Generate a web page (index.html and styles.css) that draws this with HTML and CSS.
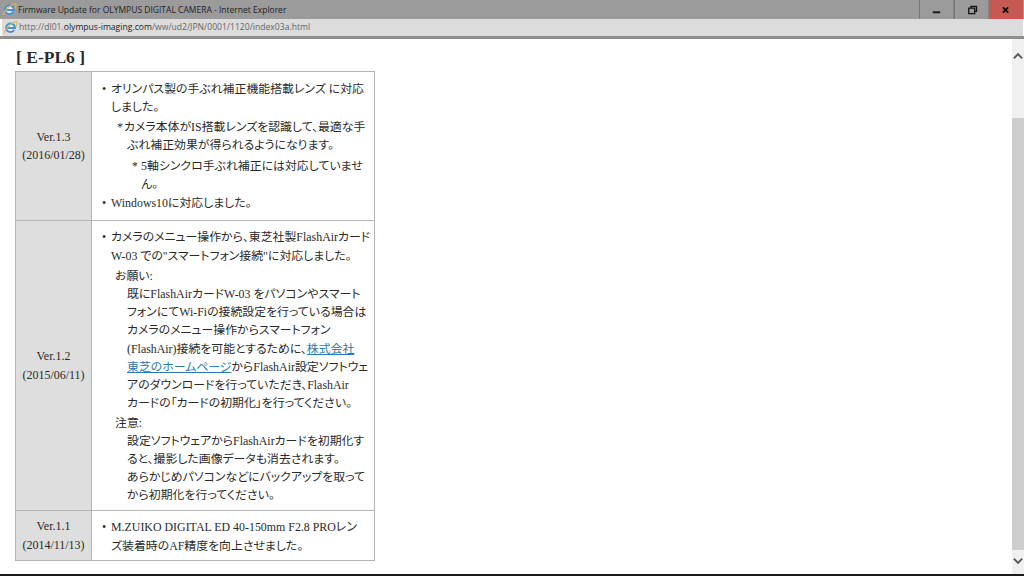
FILE: index.html
```html
<!DOCTYPE html>
<html lang="ja">
<head>
<meta charset="utf-8">
<title>Firmware Update for OLYMPUS DIGITAL CAMERA</title>
<link rel="stylesheet" href="styles.css">
</head>
<body>
<div class="window">
  <header class="titlebar">
    <svg class="ie-icon" viewBox="0 0 16 16"><path d="M3.500 8.500h9.200C12.700 5.500 10.600 3.800 8 3.800C5.200 3.800 3.400 6 3.400 8.500C3.400 11 5.400 12.800 8 12.800C9.800 12.800 11 12 11.900 10.700" fill="#f2f2f2" stroke="#3f93d6" stroke-width="2.200"/><path d="M1.800 13.800C0.800 11 9 2.500 14.500 1.800C15.800 3 14.800 5 13.500 7" fill="none" stroke="#dcb458" stroke-width="1.300"/></svg>
    <span class="title">Firmware Update for OLYMPUS DIGITAL CAMERA - Internet Explorer</span>
    <div class="controls">
      <div class="ctl"><svg viewBox="0 0 36 19"><rect x="14" y="11" width="8" height="2" fill="#111"/></svg></div>
      <div class="ctl"><svg viewBox="0 0 36 19"><path d="M15 7.500h6.500v6H15zM17.500 7.500V5.500H23.500V11H21.500" fill="none" stroke="#111" stroke-width="1.400"/></svg></div>
      <div class="ctl close"><svg viewBox="0 0 36 19"><path d="M14.500 6.500l6 6M20.500 6.500l-6 6" stroke="#111" stroke-width="2"/></svg></div>
    </div>
  </header>
  <div class="addressbar">
    <svg class="ie-icon" viewBox="0 0 16 16"><path d="M3.500 8.500h9.200C12.700 5.500 10.600 3.800 8 3.800C5.200 3.800 3.400 6 3.400 8.500C3.400 11 5.400 12.800 8 12.800C9.800 12.800 11 12 11.900 10.700" fill="#f2f2f2" stroke="#3f93d6" stroke-width="2.200"/><path d="M1.800 13.800C0.800 11 9 2.500 14.500 1.800C15.800 3 14.800 5 13.500 7" fill="none" stroke="#dcb458" stroke-width="1.300"/></svg>
    <span class="url">http://dl01.<b>olympus-imaging.com</b>/ww/ud2/JPN/0001/1120/index03a.html</span>
  </div>
  <div class="viewport">
    <main class="page">
      <h1 class="heading">[ E-PL6 ]</h1>
      <table class="versions">
        <tr class="row-a">
          <th>Ver.1.3<br>(2016/01/28)</th>
          <td>
            <ul class="list">
              <li>オリンパス製の手ぶれ補正機能搭載レンズ に対応<br>しました。
                <p class="note n1"><span class="mark">*</span>カメラ本体がIS搭載レンズを認識して、最適な手<br>ぶれ補正効果が得られるようになります。</p>
                <p class="note n2"><span class="mark">*</span>5軸シンクロ手ぶれ補正には対応していませ<br>ん。</p>
              </li>
              <li>Windows10に対応しました。</li>
            </ul>
          </td>
        </tr>
        <tr class="row-b">
          <th>Ver.1.2<br>(2015/06/11)</th>
          <td>
            <ul class="list">
              <li>カメラのメニュー操作から、東芝社製FlashAirカード<br>W-03 での"スマートフォン接続"に対応しました。
                <p class="label">お願い:</p>
                <p class="body">既にFlashAirカードW-03 をパソコンやスマート<br>フォンにてWi-Fiの接続設定を行っている場合は<br>カメラのメニュー操作からスマートフォン<br>(FlashAir)接続を可能とするために、<a href="#">株式会社<br>東芝のホームページ</a>からFlashAir設定ソフトウェ<br>アのダウンロードを行っていただき、FlashAir<br>カードの「カードの初期化」を行ってください。</p>
                <p class="label gap">注意:</p>
                <p class="body">設定ソフトウェアからFlashAirカードを初期化す<br>ると、撮影した画像データも消去されます。<br>あらかじめパソコンなどにバックアップを取って<br>から初期化を行ってください。</p>
              </li>
            </ul>
          </td>
        </tr>
        <tr class="row-c">
          <th>Ver.1.1<br>(2014/11/13)</th>
          <td>
            <ul class="list">
              <li>M.ZUIKO DIGITAL ED 40-150mm F2.8 PROレン<br>ズ装着時のAF精度を向上させました。</li>
            </ul>
          </td>
        </tr>
      </table>
    </main>
    <aside class="scrollbar">
      <div class="arrow up"><svg viewBox="0 0 13 17"><path d="M2 11l4.500-4.500L11 11" fill="none" stroke="#555" stroke-width="2"/></svg></div>
      <div class="track"><div class="thumb"></div></div>
      <div class="arrow down"><svg viewBox="0 0 13 17"><path d="M2 6l4.500 4.500L11 6" fill="none" stroke="#555" stroke-width="2"/></svg></div>
    </aside>
  </div>
  <div class="bottom"></div>
</div>
</body>
</html>
```
FILE: styles.css
```css
* { box-sizing: border-box; }
html, body { margin: 0; height: 100%; overflow: hidden; background: #fff; }
.window { width: 1024px; height: 576px; display: flex; flex-direction: column; }
.titlebar { height: 19px; background: #9b9b9b; display: flex; align-items: center; padding-left: 2px; flex: none; }
.ie-icon { width: 15px; height: 15px; flex: none; }
.title { font: 8.500px/19px "Open Sans", "Noto Sans", sans-serif; color: #222; margin-left: 1px; white-space: nowrap; flex: 1; }
.controls { display: flex; height: 21px; align-self: flex-start; margin-right: 1px; flex: none; }
.ctl { width: 35px; height: 21px; border: 1px solid #858585; border-top: 0; border-left-color: #777; background: #9b9b9b; }
.ctl svg { display: block; width: 100%; height: 100%; }
.close { background: #c65a52; border-color: #c65a52; width: 34px; }
.addressbar { height: 17px; background: #dcdcdc; display: flex; align-items: center; padding-left: 1px; flex: none; margin: 0 1px 0 2px; }
.url { font: 8.600px/17px "Open Sans", "Noto Sans", sans-serif; color: #666; margin-left: 1px; white-space: nowrap; }
.url b { font-weight: 400; color: #222; }
.viewport { flex: 1; min-height: 0; display: flex; border-top: 3px solid #8f8f8f; }
.page { flex: 1; padding: 6px 0 0 15px; font-family: "Liberation Serif", "Noto Sans CJK JP", serif; color: #2a2a2a; }
.heading { margin: 0 0 2px 1px; font-size: 17.500px; line-height: 24px; font-weight: 700; }
.versions { width: 360px; table-layout: fixed; border-collapse: collapse; font-size: 11.900px; line-height: 18.200px; font-feature-settings: "palt"; white-space: nowrap; }
.versions th, .versions td { border: 1px solid #b5b5b5; padding: 0; }
.row-b td, .row-c td { padding-top: 2px; }
.versions th { width: 76px; background: #dedede; font-weight: 400; text-align: center; font-size: 12px; }
.row-a { height: 149px; }
.row-b { height: 290px; }
.row-c { height: 50px; }
.list { list-style: none; margin: 0; padding: 0 0 0 19px; }
.list li { position: relative; }
.list li + li { margin-top: 1px; }
.list li::before { content: "•"; position: absolute; left: -9px; }
.list p { margin: 0; }
.n1 { padding: 2px 0 0 16px; text-indent: -10px; }
.n2 { padding: 2px 0 0 30px; text-indent: -9px; }
.mark { display: inline-block; text-indent: 0; }
.n1 .mark { width: 7px; }
.n2 .mark { width: 9px; }
.label { padding: 2px 0 0 4px; }
.body { padding-left: 16px; }
.gap { padding-top: 1px; }
a { color: #2f7aa8; }
.scrollbar { width: 12px; background: #f0f0f0; display: flex; flex-direction: column; flex: none; }
.arrow { flex: none; display: flex; align-items: center; }
.up { height: 34px; }
.down { height: 24px; padding-bottom: 3px; }
.arrow svg { display: block; width: 12px; height: 16px; }
.track { flex: 1; padding-top: 45px; display: flex; }
.thumb { flex: 1; background: #cdcdcd; }
.bottom { height: 2px; background: #1a1a1a; flex: none; }
```
